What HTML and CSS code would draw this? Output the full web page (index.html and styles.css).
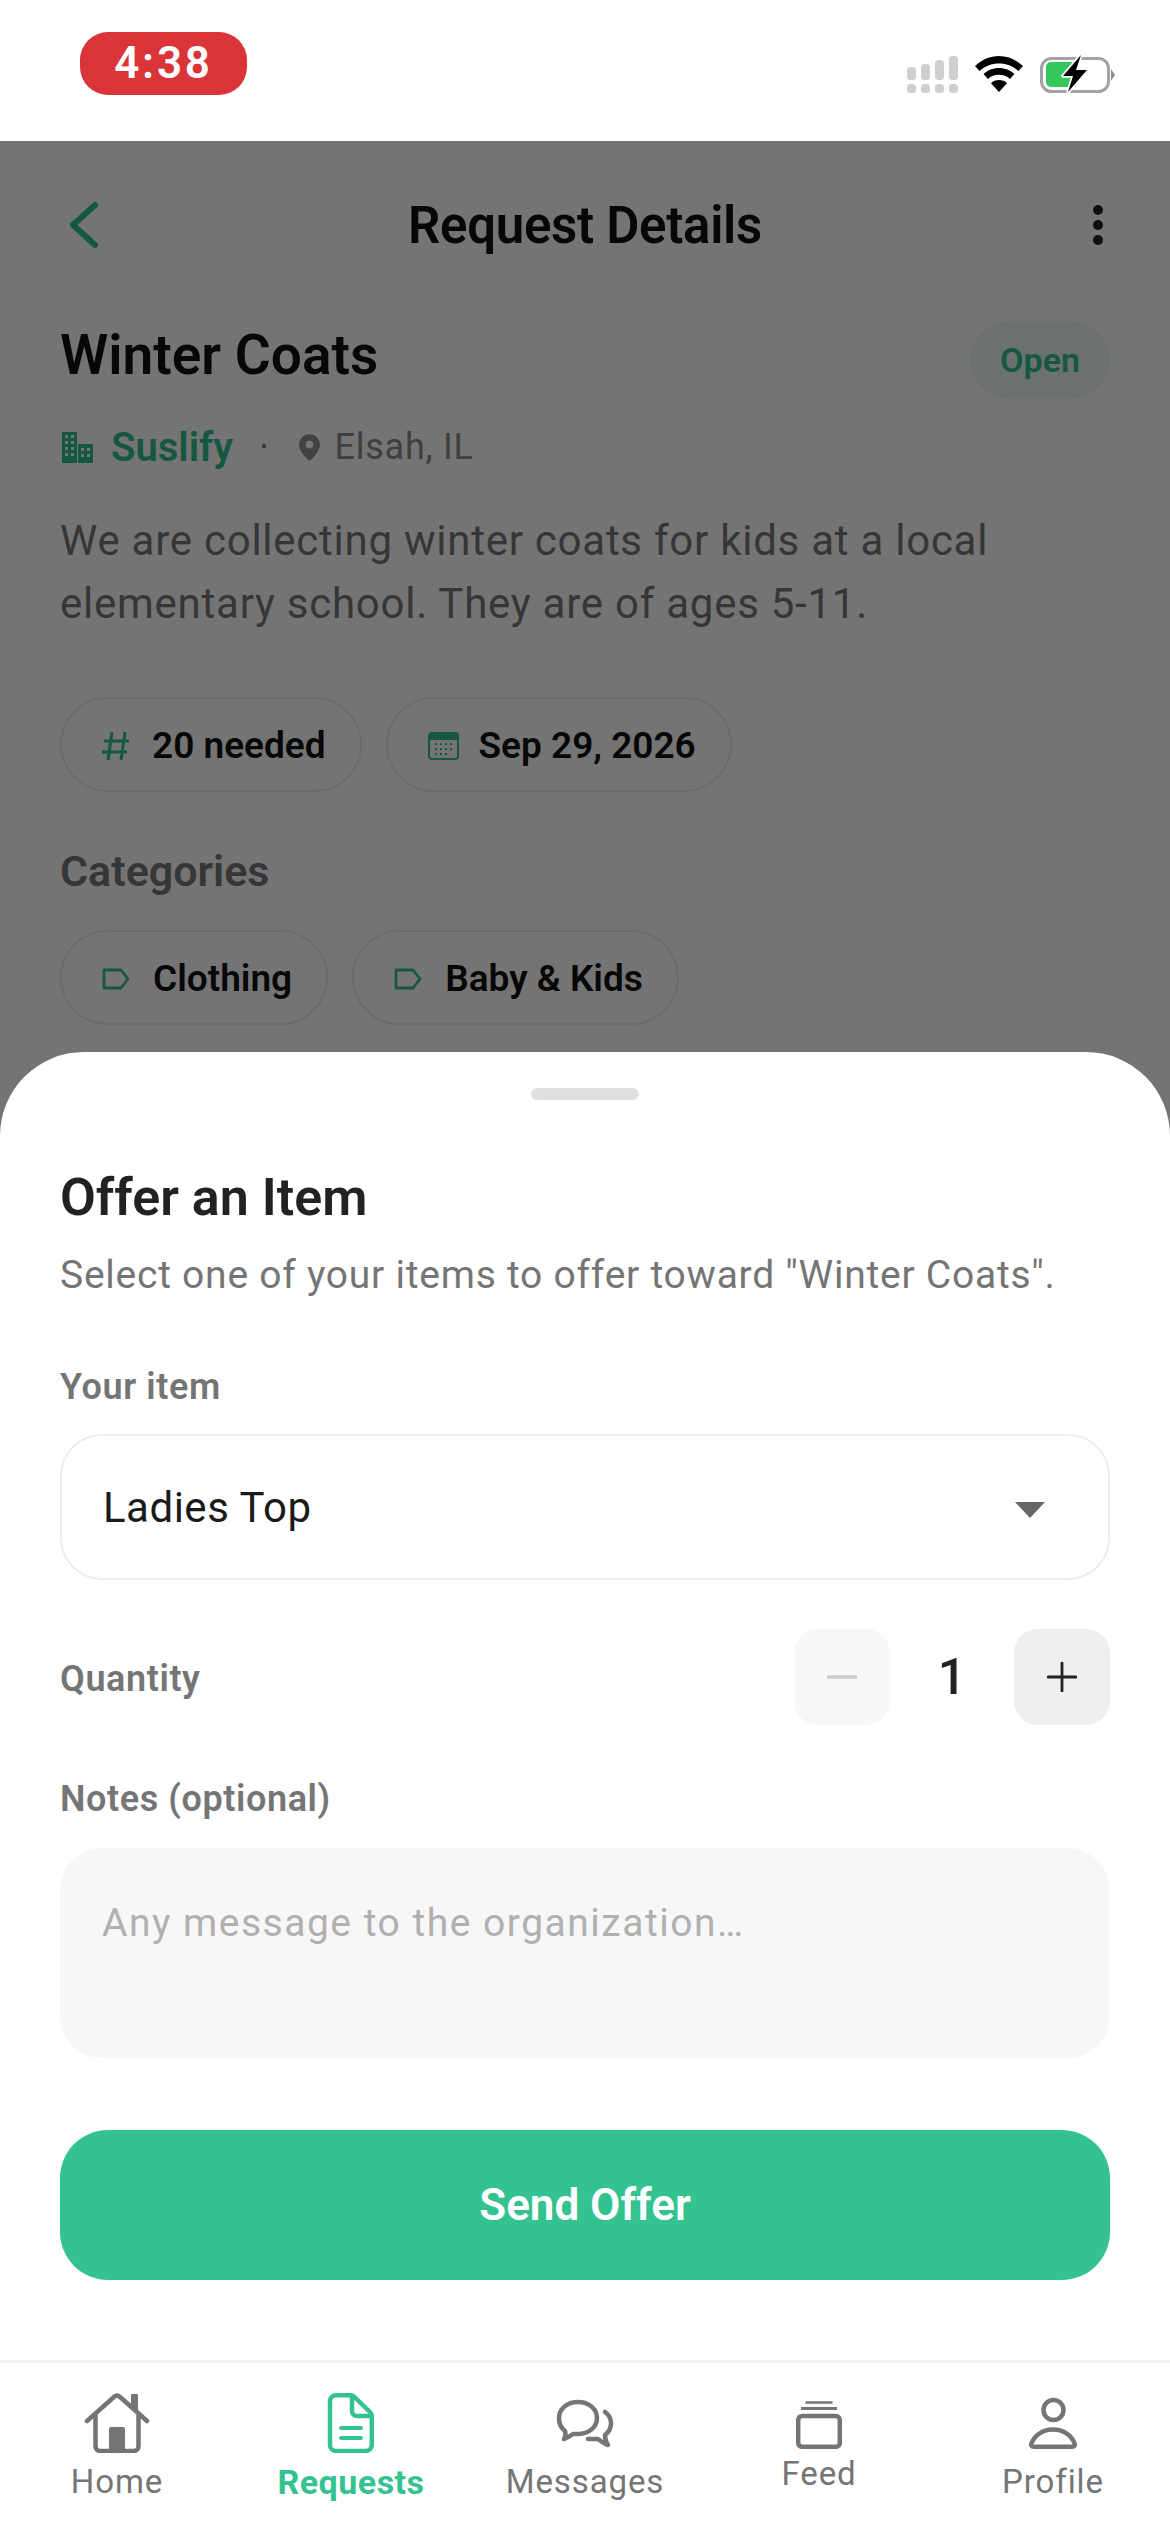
FILE: index.html
```html
<!DOCTYPE html>
<html lang="en">
<head>
<meta charset="utf-8">
<title>Request Details</title>
<link rel="stylesheet" href="styles.css">
</head>
<body>
<div class="app">
  <header class="status">
    <div class="clock">4:38</div>
    <div class="status-icons">
      <svg class="ic-signal" viewBox="0 0 51 37" fill="#cfcfcf"><rect x="0" y="11" width="9" height="13" rx="3.500"/><rect x="14" y="8" width="9" height="16" rx="3.500"/><rect x="28" y="4" width="9" height="20" rx="3.500"/><rect x="42" y="0" width="9" height="24" rx="3.500"/><rect x="0" y="28" width="9" height="9" rx="3.500"/><rect x="14" y="28" width="9" height="9" rx="3.500"/><rect x="28" y="28" width="9" height="9" rx="3.500"/><rect x="42" y="28" width="9" height="9" rx="3.500"/></svg>
      <svg class="ic-wifi" viewBox="0 0 48 36"><path d="M24 0C15 0 7 3.500 0 10l4.500 5C10 10 16.500 7.500 24 7.500S38 10 43.500 15L48 10C41 3.500 33 0 24 0z"/><path d="M24 12c-6 0-11.500 2.200-15.500 6l4.500 5c3-2.800 6.800-4.200 11-4.200s8 1.400 11 4.200l4.500-5C35.500 14.200 30 12 24 12z"/><path d="M24 24c-3.200 0-6 1.200-8 3.200L24 36l8-8.800c-2-2-4.800-3.200-8-3.200z"/></svg>
      <svg class="ic-batt" viewBox="0 0 76 40"><rect x="1.500" y="4.500" width="67" height="33" rx="10" fill="none" stroke="#a3a3a3" stroke-width="3"/><path d="M11 8h25v25H11a5 5 0 0 1-5-5V13a5 5 0 0 1 5-5z" fill="#34c759"/><path d="M71 15l4 6-4 6z" fill="#8e8e8e"/><path d="M41 1L23 22h10l-5 16 19-22H36z" fill="#000" stroke="#fff" stroke-width="3.500" paint-order="stroke" stroke-linejoin="round"/></svg>
    </div>
  </header>

  <main class="stage">
    <section class="details">
      <div class="topbar">
        <svg class="back" viewBox="0 0 28 46"><path d="M25 3L3 23l22 20" fill="none" stroke="#2fc08f" stroke-width="6" stroke-linecap="round" stroke-linejoin="round"/></svg>
        <h1 class="page-title">Request Details</h1>
        <svg class="more" viewBox="0 0 12 40" fill="#222"><circle cx="6" cy="5" r="5"/><circle cx="6" cy="20" r="5"/><circle cx="6" cy="35" r="5"/></svg>
      </div>
      <div class="title-row">
        <h2 class="req-title">Winter Coats</h2>
        <span class="status-pill">Open</span>
      </div>
      <div class="meta">
        <svg class="ic-org" viewBox="0 0 31 31"><path fill="#2fc08f" d="M0 0h15v31H0zM16 12h15v19H16z"/><path fill="#fff" d="M3 3h3v3H3zM9 3h3v3H9zM3 9h3v3H3zM9 9h3v3H9zM3 15h3v3H3zM9 15h3v3H9zM3 21h3v3H3zM9 21h3v3H9zM19 16h3v3h-3zM25 16h3v3h-3zM19 22h3v3h-3zM25 22h3v3h-3z"/></svg>
        <span class="org">Suslify</span>
        <span class="dot">·</span>
        <svg class="ic-pin" viewBox="0 0 22 28" fill="#919191"><path fill-rule="evenodd" d="M11 0C5 0 0 5 0 11c0 8 11 17 11 17s11-9 11-17C22 5 17 0 11 0zm0 15a4 4 0 1 1 0-8 4 4 0 0 1 0 8z"/></svg>
        <span class="place">Elsah, IL</span>
      </div>
      <p class="desc">We are collecting winter coats for kids at a local elementary school. They are of ages 5-11.</p>
      <div class="chips chips-info">
        <span class="chip"><svg class="ic-hash" viewBox="0 0 28 30"><path d="M10 1L6 29M23 1l-4 28M2 10h25M0 21h25" fill="none" stroke="#2fc08f" stroke-width="3"/></svg>20 needed</span>
        <span class="chip"><svg class="ic-cal" viewBox="0 0 31 28"><rect x="1" y="1" width="29" height="26" rx="3" fill="#fff" stroke="#2fc08f" stroke-width="2"/><path d="M1 4a3 3 0 0 1 3-3h23a3 3 0 0 1 3 3v4H1z" fill="#2fc08f"/><path fill="#2fc08f" d="M7 11h2v2H7zM12 11h2v2h-2zM17 11h2v2h-2zM22 11h2v2h-2zM7 16h2v2H7zM12 16h2v2h-2zM17 16h2v2h-2zM22 16h2v2h-2zM7 21h2v2H7zM12 21h2v2h-2zM17 21h2v2h-2z"/></svg>Sep 29, 2026</span>
      </div>
      <h3 class="section-label">Categories</h3>
      <div class="chips">
        <span class="chip"><svg class="ic-tag" viewBox="0 0 28 22"><path d="M2 2h17l7 9-7 9H2z" fill="none" stroke="#2fc08f" stroke-width="2.800" stroke-linejoin="round"/></svg>Clothing</span>
        <span class="chip"><svg class="ic-tag" viewBox="0 0 28 22"><path d="M2 2h17l7 9-7 9H2z" fill="none" stroke="#2fc08f" stroke-width="2.800" stroke-linejoin="round"/></svg>Baby &amp; Kids</span>
      </div>
    </section>
    <div class="scrim"></div>

    <section class="sheet">
      <div class="handle"></div>
      <h2 class="sheet-title">Offer an Item</h2>
      <p class="sheet-sub">Select one of your items to offer toward "Winter Coats".</p>
      <label class="field-label first">Your item</label>
      <div class="select">
        <span>Ladies Top</span>
        <svg class="caret" viewBox="0 0 30 16"><path d="M0 0h30L15 16z" fill="#666"/></svg>
      </div>
      <div class="qty-row">
        <span class="field-label qty-label">Quantity</span>
        <div class="stepper">
          <div class="step step-off"><svg viewBox="0 0 30 30"><path d="M1 15h28" stroke="#cdcdcd" stroke-width="3.500" stroke-linecap="round"/></svg></div>
          <span class="qty">1</span>
          <div class="step"><svg viewBox="0 0 30 30"><path d="M1 15h28M15 1v28" stroke="#222" stroke-width="2.800" stroke-linecap="round"/></svg></div>
        </div>
      </div>
      <label class="field-label notes-label">Notes (optional)</label>
      <div class="notes">Any message to the organization…</div>
      <button class="send" type="button">Send Offer</button>
    </section>
  </main>

  <nav class="tabs">
    <a class="tab">
      <svg class="tab-ic" viewBox="0 0 66 60"><path d="M3 28L30.500 3.500a3.500 3.500 0 0 1 5 0L63 28" fill="none" stroke="#757575" stroke-width="4.500" stroke-linecap="round" stroke-linejoin="round"/><path d="M11.500 22v31.500a4.500 4.500 0 0 0 4.500 4.500h34a4.500 4.500 0 0 0 4.500-4.500V22" fill="none" stroke="#757575" stroke-width="4.500"/><path d="M25 58V36a2 2 0 0 1 2-2h12a2 2 0 0 1 2 2v22z" fill="#757575"/><path d="M47 2a1 1 0 0 1 1-1h5a1 1 0 0 1 1 1v18l-7-7z" fill="#757575"/></svg>
      <span>Home</span>
    </a>
    <a class="tab active">
      <svg class="tab-ic" viewBox="0 0 66 60"><path d="M18 2.200H33a5 5 0 0 1 3.500 1.800L52 19a6 6 0 0 1 1.800 4v29a6 6 0 0 1-6 6H18a6 6 0 0 1-6-6V8a6 6 0 0 1 6-5.800z" fill="none" stroke="#34c291" stroke-width="4.500"/><path d="M34 3v15a5 5 0 0 0 5 5h14" fill="none" stroke="#34c291" stroke-width="4.500"/><path d="M23 35h20M23 45h20" fill="none" stroke="#34c291" stroke-width="3.800" stroke-linecap="round"/></svg>
      <span>Requests</span>
    </a>
    <a class="tab">
      <svg class="tab-ic" viewBox="0 0 66 60"><path d="M26 9c11 0 19 7 19 16s-8 16-19 16h-5c-3 2-6 4-9 5 1.500-2 2-4.500 1-8-4-3-6-8-6-13C7 16 15 9 26 9z" fill="none" stroke="#757575" stroke-width="4.500" stroke-linejoin="round"/><path d="M53 19c4 3 6 7 6 11 0 5-2 9-6 12 0 4 1 7 3 10-4-1-7-4-10-6H36" fill="none" stroke="#757575" stroke-width="4.500" stroke-linecap="round" stroke-linejoin="round"/></svg>
      <span>Messages</span>
    </a>
    <a class="tab tab-feed">
      <svg class="tab-ic-feed" viewBox="0 0 46 48"><rect x="2.200" y="15" width="41.600" height="30.800" rx="4" fill="none" stroke="#757575" stroke-width="4.500"/><path d="M5 7.500h36" stroke="#757575" stroke-width="3"/><path d="M9.500 1.500h27" stroke="#757575" stroke-width="2.500"/></svg>
      <span>Feed</span>
    </a>
    <a class="tab">
      <svg class="tab-ic" viewBox="0 0 66 60"><circle cx="33.500" cy="17" r="10" fill="none" stroke="#757575" stroke-width="4.500"/><path d="M14 53.800c-2.500 0-3.500-1.500-2.500-3.500C14.500 42 23 36.500 33 36.500S51.500 42 54.500 50.300c1 2 0 3.500-2.500 3.500z" fill="none" stroke="#757575" stroke-width="4.500" stroke-linejoin="round"/></svg>
      <span>Profile</span>
    </a>
  </nav>
</div>
</body>
</html>
```

FILE: styles.css
```css
* { box-sizing: border-box; }
html, body { margin: 0; padding: 0; }
body { font-family: Roboto, "Noto Sans", sans-serif; background: #fff; color: #1a1a1a; }
h1, h2, h3, p { margin: 0; font-weight: 500; }

.app { width: 1170px; height: 2532px; display: flex; flex-direction: column; overflow: hidden; }

.status { height: 141px; flex: none; display: flex; justify-content: space-between; align-items: flex-start; padding: 32px 54px 0 80px; background: #fff; }
.clock { width: 167px; height: 63px; border-radius: 28px; background: #d93438; color: #fff; font-size: 44px; font-weight: 600; letter-spacing: 2.800px; line-height: 63px; text-align: center; }
.status-icons { display: flex; align-items: center; gap: 17px; margin-top: 22px; }
.ic-signal { width: 51px; height: 37px; }
.ic-wifi { width: 48px; height: 36px; }
.ic-batt { width: 76px; height: 40px; }

.stage { position: relative; flex: 1; overflow: hidden; }
.details { padding: 0 60px; background: #fff; height: 100%; }
.scrim { position: absolute; inset: 0; background: rgba(0, 0, 0, .545); }

.topbar { height: 168px; display: flex; align-items: center; justify-content: space-between; padding: 0 6px 0 10px; position: relative; }
.back { width: 28px; height: 46px; }
.page-title { font-size: 51px; font-weight: 600; letter-spacing: -.3px; color: #111; position: absolute; left: 0; right: 0; text-align: center; }
.more { width: 12px; height: 40px; }

.title-row { display: flex; justify-content: space-between; align-items: flex-start; margin-top: 12px; height: 78px; }
.req-title { font-size: 55px; font-weight: 600; color: #111; line-height: 78px; margin-top: -5px; }
.status-pill { width: 140px; height: 78px; border-radius: 39px; background: #ebf8f3; color: #2fc08f; font-size: 34px; font-weight: 600; line-height: 78px; text-align: center; }

.meta { display: flex; align-items: center; height: 60px; margin-top: 18px; color: #777; padding-left: 2px; }
.ic-org { width: 31px; height: 31px; margin-right: 18px; }
.org { font-size: 40px; font-weight: 600; color: #2fc08f; }
.dot { font-size: 36px; margin: 0 30px 0 26px; }
.ic-pin { width: 21px; height: 27px; margin-right: 15px; }
.place { font-size: 36px; letter-spacing: .75px; color: #8a8a8a; }

.desc { font-size: 42px; font-weight: 400; line-height: 63px; letter-spacing: .75px; color: #777; margin-top: 32px; width: 1000px; }

.chips { display: flex; gap: 24px; }
.chips-info { margin-top: 62px; }
.chip { height: 95px; padding: 2px 34px 0 40px; border: 2px solid #ececec; border-radius: 48px; display: inline-flex; align-items: center; font-size: 37px; font-weight: 600; color: #111; background: #fff; }
.ic-hash { width: 28px; height: 30px; margin-right: 22px; }
.ic-cal { width: 31px; height: 28px; margin-right: 20px; }
.ic-tag { width: 28px; height: 22px; margin-right: 23px; }
.section-label { font-size: 43px; font-weight: 600; color: #777; margin: 54px 0 34px; line-height: 50px; }

.sheet { position: absolute; left: 0; right: 0; bottom: 0; top: 911px; background: #fff; border-radius: 84px 84px 0 0; padding: 36px 60px 0; border-bottom: 3px solid #f5f5f5; }
.handle { width: 108px; height: 12px; border-radius: 6px; background: #e0e0e0; margin: 0 auto; }
.sheet-title { font-size: 52px; font-weight: 600; color: #222; line-height: 64px; margin-top: 66px; }
.sheet-sub { font-size: 39px; font-weight: 400; letter-spacing: .75px; color: #757575; line-height: 50px; margin-top: 20px; }
.field-label { font-size: 36px; font-weight: 600; letter-spacing: .6px; color: #757575; line-height: 44px; }
.first { display: block; margin-top: 65px; }
.select { height: 146px; margin-top: 25px; border: 2px solid #ededed; border-radius: 42px; display: flex; align-items: center; justify-content: space-between; padding: 0 63px 0 41px; font-size: 42px; letter-spacing: .5px; color: #1a1a1a; }
.caret { width: 30px; height: 16px; margin-top: 5px; }
.qty-row { display: flex; justify-content: space-between; align-items: center; margin-top: 49px; height: 96px; }
.qty-label { padding-top: 3px; }
.stepper { display: flex; align-items: center; }
.step { width: 96px; height: 96px; border-radius: 24px; background: #efefef; display: flex; align-items: center; justify-content: center; }
.step svg { width: 30px; height: 30px; }
.step-off { background: #f7f7f7; }
.qty { width: 124px; text-align: center; font-size: 50px; font-weight: 500; color: #222; }
.notes-label { display: block; margin-top: 52px; }
.notes { height: 210px; margin-top: 27px; background: #f7f7f7; border-radius: 42px; padding: 50px 42px 0; font-size: 39px; letter-spacing: 1.500px; line-height: 50px; color: #b0b0b0; }
.send { display: block; width: 100%; height: 150px; margin-top: 72px; border: 0; border-radius: 48px; background: #34c291; color: #fff; font-family: inherit; font-size: 44px; font-weight: 600; }

.tabs { height: 169px; flex: none; display: grid; grid-template-columns: repeat(5, 1fr); background: #fff; }
.tab { display: flex; flex-direction: column; align-items: center; padding-top: 30px; font-size: 33px; letter-spacing: .9px; color: #757575; line-height: 44px; }
.tab-ic { width: 66px; height: 60px; margin-bottom: 7px; }
.tab-feed { padding-top: 38px; }
.tab-ic-feed { width: 46px; height: 48px; margin-bottom: 3px; }
.active { color: #34c291; font-size: 34px; font-weight: 700; letter-spacing: .5px; }
```
